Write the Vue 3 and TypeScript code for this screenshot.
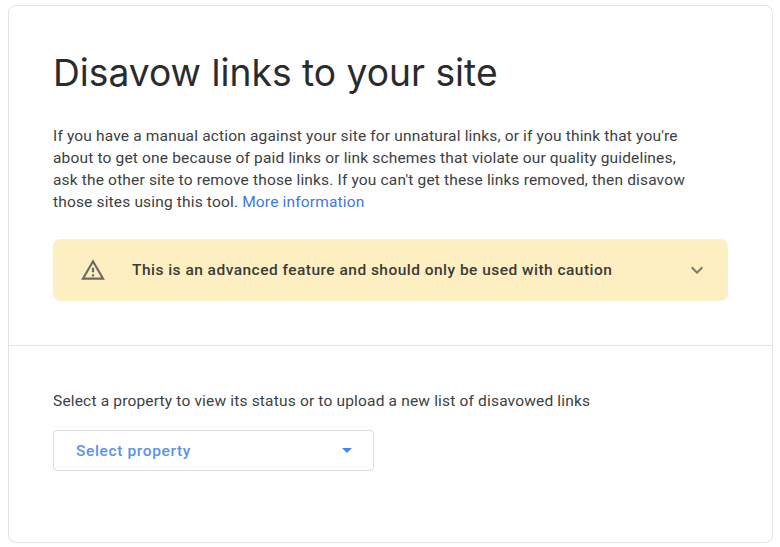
<script setup lang="ts">
const title: string = 'Disavow links to your site'
</script>

<template>
  <div class="page">
    <main class="card">
      <section class="top">
        <h1>{{ title }}</h1>
        <p class="intro">If you have a manual action against your site for unnatural links, or if you think that you're<br>about to get one because of paid links or link schemes that violate our quality guidelines,<br>ask the other site to remove those links. If you can't get these links removed, then disavow<br>those sites using this tool. <a href="#">More information</a></p>
        <div class="warn">
          <svg class="tri" width="26" height="26" viewBox="0 0 24 24"><path fill="#6f6a5f" d="M12 5.99 19.53 19H4.47L12 5.99M12 2 1 21h22L12 2zm1 14h-2v2h2v-2zm0-6h-2v4h2v-4z"/></svg>
          <span class="warn-text">This is an advanced feature and should only be used with caution</span>
          <svg class="chev" width="24" height="24" viewBox="0 0 24 24"><path fill="#7d786c" d="M7.41 8.59 12 13.17l4.59-4.58L18 10l-6 6-6-6z"/></svg>
        </div>
      </section>
      <section class="bottom">
        <p class="label">Select a property to view its status or to upload a new list of disavowed links</p>
        <div class="select">
          <span>Select property</span>
          <i class="caret"></i>
        </div>
      </section>
    </main>
  </div>
</template>

<style>
body { margin: 0; background: #fff; }
</style>

<style scoped>
.page {
  width: 780px;
  height: 547px;
  box-sizing: border-box;
  padding: 5px 7px 4px 8px;
  font-family: Roboto, "Liberation Sans", sans-serif;
}
.card {
  height: 100%;
  box-sizing: border-box;
  border: 1px solid #e3e3e3;
  border-radius: 8px;
  display: flex;
  flex-direction: column;
}
.top {
  padding: 0 44px 44px 44px;
  border-bottom: 1px solid #e3e3e3;
}
h1 {
  margin: 39px 0 0;
  font-family: Inter, "Open Sans", sans-serif;
  font-weight: 400;
  font-size: 37.2px;
  line-height: 56px;
  color: #2a2b2e;
}
.intro {
  margin: 24px 0 0;
  font-size: 15.5px;
  line-height: 22px;
  letter-spacing: 0.165px;
  color: #3c4043;
}
a { color: #3b78e7; text-decoration: none; }
.warn {
  margin-top: 26px;
  height: 62px;
  background: #feefc3;
  border-radius: 8px;
  display: flex;
  align-items: center;
  padding: 0 19px 0 27px;
}
.warn-text {
  margin-left: 26px;
  flex: 1;
  font-size: 15.5px;
  font-weight: 500;
  letter-spacing: 0.47px;
  color: #3c3b36;
}
.bottom { padding: 44px 44px 0; }
.label {
  margin: 0;
  font-size: 15.5px;
  line-height: 22px;
  letter-spacing: 0.175px;
  color: #3c4043;
}
.select {
  margin-top: 18px;
  width: 321px;
  height: 41px;
  box-sizing: border-box;
  border: 1px solid #dadce0;
  border-radius: 4px;
  display: flex;
  align-items: center;
  justify-content: space-between;
  padding: 0 21px 0 22px;
  color: #5a92ec;
  font-size: 15.5px;
  font-weight: 500;
  letter-spacing: 0.63px;
}
.caret {
  width: 0;
  height: 0;
  border-left: 5.5px solid transparent;
  border-right: 5.5px solid transparent;
  border-top: 5.5px solid #4285f4;
}
</style>
